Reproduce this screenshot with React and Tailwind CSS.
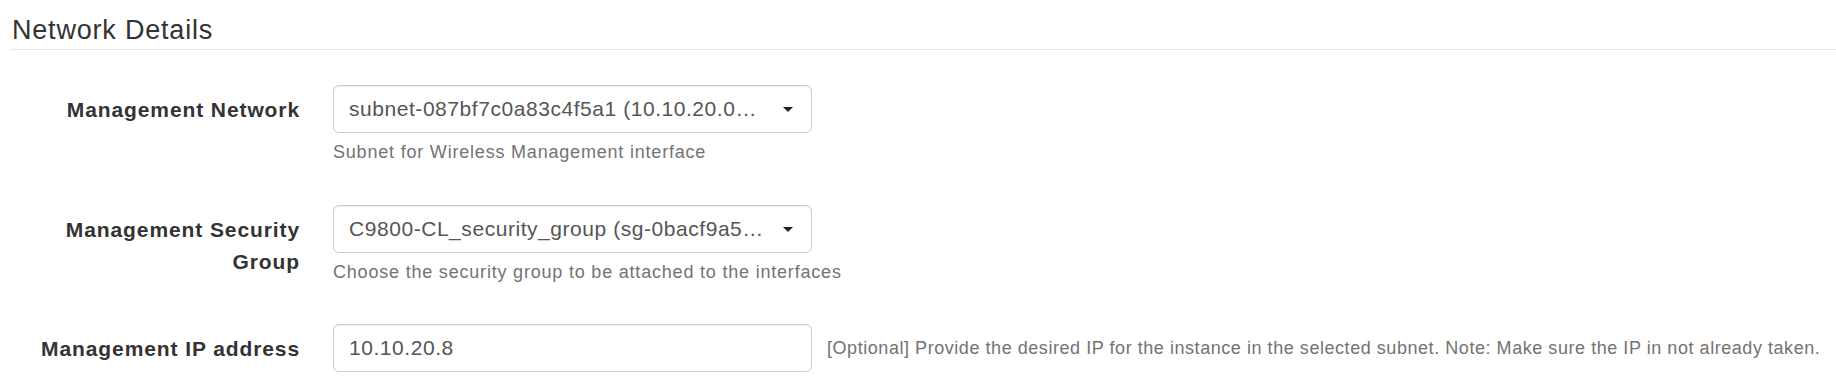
import React from 'react';

function Caret() {
  return (
    <svg width="10" height="5" viewBox="0 0 10 5" className="shrink-0 fill-[#222]">
      <path d="M0 0h10L5 5z" />
    </svg>
  );
}

function SelectBox({ value }) {
  return (
    <div className="flex h-[48px] w-[479px] items-center justify-between rounded-[6px] border border-[#ccc] bg-white pl-[15px] pr-[18px] shadow-[inset_0_1px_1px_rgba(0,0,0,0.075)]">
      <span className="whitespace-nowrap text-[21px] tracking-[0.55px] text-[#555]">{value}</span>
      <Caret />
    </div>
  );
}

function TextBox({ value }) {
  return (
    <div className="flex h-[48px] w-[479px] shrink-0 items-center rounded-[6px] border border-[#ccc] bg-white pl-[15px] shadow-[inset_0_1px_1px_rgba(0,0,0,0.075)]">
      <span className="whitespace-nowrap text-[21px] tracking-[0.55px] text-[#555]">{value}</span>
    </div>
  );
}

function Help({ children }) {
  return (
    <p className="mt-[7px] whitespace-nowrap text-[18px] leading-[24px] tracking-[0.8px] text-[#737373]">{children}</p>
  );
}

function FieldRow({ label, className, children }) {
  return (
    <div className={`flex items-start ${className}`}>
      <label className="w-[290px] shrink-0 pt-[9px] text-right text-[21px] font-bold leading-[32px] tracking-[0.9px] text-[#333]">
        {label}
      </label>
      <div className="ml-[33px] flex flex-col">{children}</div>
    </div>
  );
}

export default function App() {
  return (
    <div className="h-[384px] w-full overflow-hidden bg-white pl-[10px] font-['Liberation_Sans',Arial,sans-serif]">
      {/* Encabezado */}
      <h2 className="mb-[35px] border-b border-[#e5e5e5] pb-[4px] pl-[2px] pt-[15px] text-[27px] font-normal leading-[30px] tracking-[0.8px] text-[#333]">
        Network Details
      </h2>

      <FieldRow label="Management Network" className="mb-[41px]">
        <SelectBox value="subnet-087bf7c0a83c4f5a1 (10.10.20.0…" />
        <Help>Subnet for Wireless Management interface</Help>
      </FieldRow>

      <FieldRow label="Management Security Group" className="mb-[40px]">
        <SelectBox value="C9800-CL_security_group (sg-0bacf9a5…" />
        <Help>Choose the security group to be attached to the interfaces</Help>
      </FieldRow>

      <FieldRow label="Management IP address">
        <div className="flex items-center">
          <TextBox value="10.10.20.8" />
          <span className="ml-[15px] whitespace-nowrap text-[18px] leading-[24px] tracking-[0.55px] text-[#737373]">
            [Optional] Provide the desired IP for the instance in the selected subnet. Note: Make sure the IP in not already taken.
          </span>
        </div>
      </FieldRow>
    </div>
  );
}
